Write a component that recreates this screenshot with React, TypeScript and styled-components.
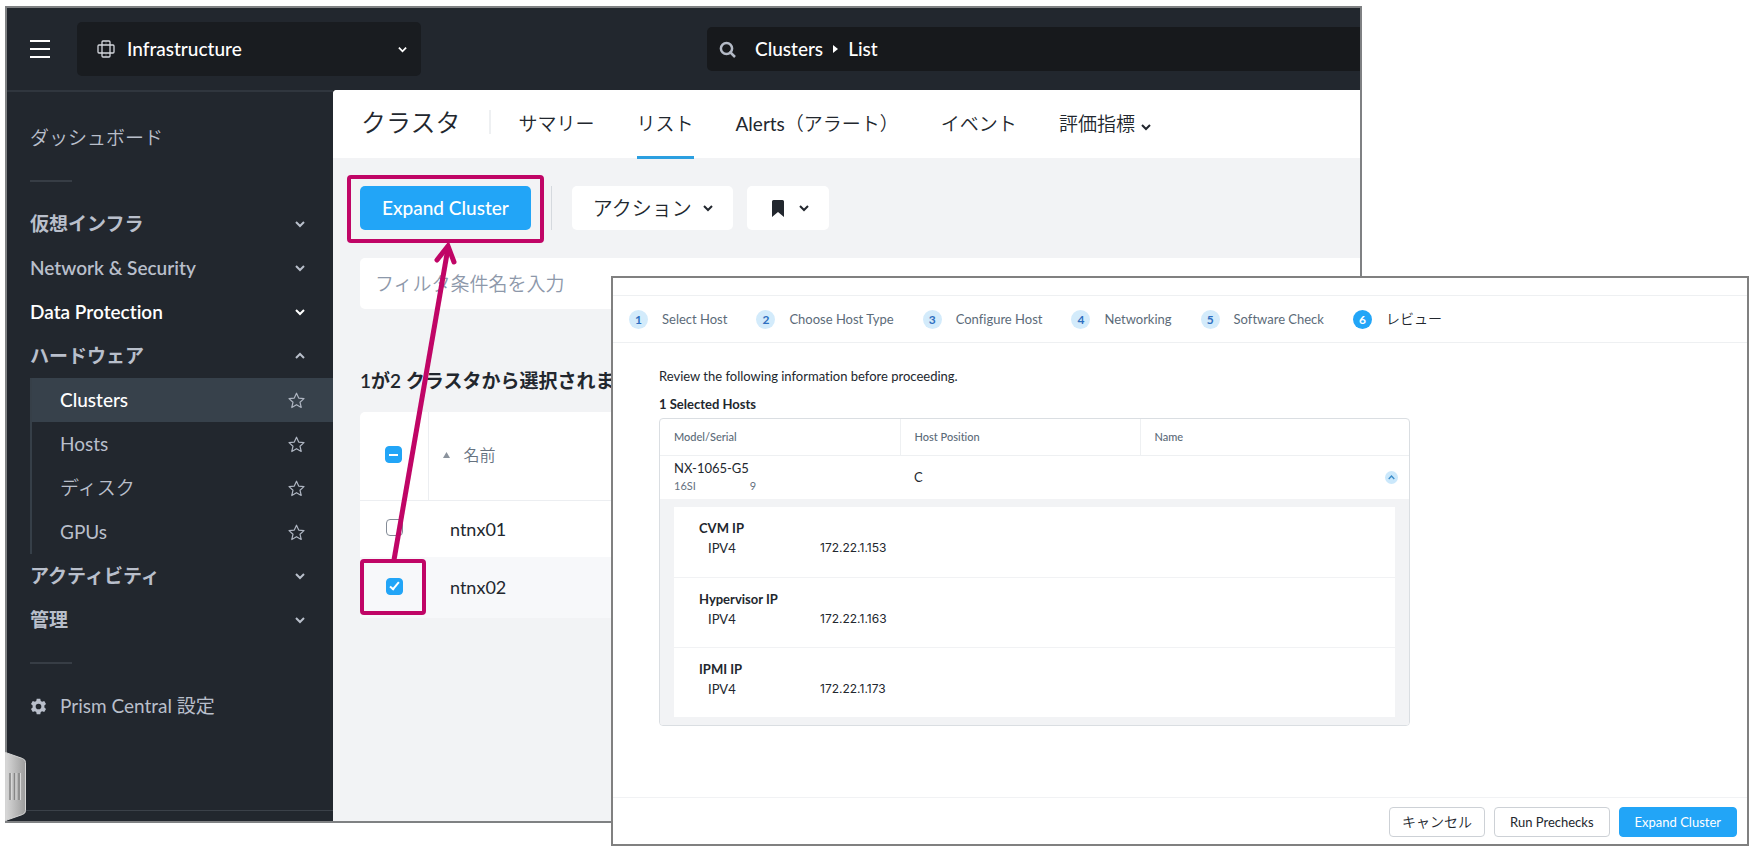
import React from "react";
import styled, { createGlobalStyle, css } from "styled-components";

const GlobalStyle = createGlobalStyle`
  *, *::before, *::after { box-sizing: border-box; }
  body {
    margin: 0;
    background: #fff;
    color: #22272e;
    font-family: Lato, "Noto Sans CJK JP", sans-serif;
    font-size: 19px;
    line-height: 24px;
    font-variant-ligatures: none;
  }
  button, input { font: inherit; color: inherit; }
  button { border: 0; padding: 0; background: none; cursor: pointer; }
  a { color: inherit; text-decoration: none; }
  h1, h2, h3, p, ul, ol, dl, dd { margin: 0; padding: 0; }
  ul, ol { list-style: none; }
  table { border-collapse: collapse; border-spacing: 0; }
  svg { display: block; flex: none; }
`;

const accent = "#22a5f7";
const marker = "#c00566";

/* ---------- windows ---------- */

const Desk = styled.div`
  position: relative;
  display: flex;
  min-height: 100vh;
  padding: 6px 391px 27px 5px;
`;

const ConsoleWindow = styled.div`
  position: relative;
  flex: 1;
  min-width: 0;
  display: flex;
  flex-direction: column;
  border: 2px solid #7f8183;
  background: #22272e;
`;

const WizardWindow = styled.section`
  position: absolute;
  inset: 276px 4px 4px 611px;
  display: flex;
  flex-direction: column;
  border: 2px solid #808080;
  background: #fff;
  font-size: 13px;
  line-height: 18px;
`;

/* ---------- top bar ---------- */

const TopBar = styled.header`
  display: grid;
  grid-template-columns: 70px 344px 1fr;
  align-items: center;
  height: 82px;
  color: #fff;
`;

const MenuButton = styled.button`
  justify-self: start;
  margin-left: 23px;
  display: flex;
  flex-direction: column;
  gap: 6px;
  width: 20px;
  span { height: 2px; background: #fff; }
`;

const AppSwitcher = styled.button`
  display: flex;
  align-items: center;
  gap: 12px;
  height: 54px;
  padding: 0 14px 0 20px;
  border-radius: 5px;
  background: #191c20;
  font-weight: 500;
  span { flex: 1; text-align: left; }
`;

const SearchBar = styled.div`
  display: flex;
  align-items: center;
  gap: 19px;
  height: 44px;
  margin-left: 286px;
  padding-left: 12px;
  border-radius: 5px 0 0 5px;
  background: #17191c;
  color: #b4bac6;
`;

const Crumbs = styled.nav`
  display: flex;
  align-items: center;
  gap: 10px;
  color: #fff;
  font-weight: 500;
`;

/* ---------- sidebar ---------- */

const Body = styled.div`
  flex: 1;
  display: flex;
`;

const Sidebar = styled.nav`
  display: flex;
  flex-direction: column;
  width: 326px;
  padding: 24px 0 10px 23px;
  border-top: 2px solid #30363e;
  color: #b9bfcb;
`;

const rowLayout = css`
  display: flex;
  align-items: center;
  width: 100%;
  height: 44px;
`;

const DashboardLink = styled.a`
  ${rowLayout}
  font-weight: 350;
`;

const Divider = styled.hr`
  width: 42px;
  height: 2px;
  margin: 20px 0;
  border: 0;
  background: #373d45;
`;

const GroupButton = styled.button<{ $bright?: boolean }>`
  ${rowLayout}
  justify-content: space-between;
  padding-right: 28px;
  font-weight: 600;
  color: ${(p) => (p.$bright ? "#fff" : "#b9bfcb")};
`;

const SubList = styled.ul`
  border-left: 2px solid #363f48;
`;

const SubItem = styled.li<{ $active?: boolean }>`
  ${rowLayout}
  justify-content: space-between;
  padding: 0 28px 0 28px;
  background: ${(p) => (p.$active ? "#37414b" : "none")};
  a { color: ${(p) => (p.$active ? "#fff" : "#b9bfcb")}; font-weight: ${(p) => (p.$active ? 500 : 350)}; }
  a:lang(en) { font-weight: ${(p) => (p.$active ? 500 : 400)}; }
`;

const SettingsLink = styled.a`
  ${rowLayout}
  gap: 13px;
`;

const SidebarFoot = styled.div`
  margin: auto 0 0 -23px;
  border-top: 1px solid #3b4149;
`;

const DrawerHandle = styled.button`
  position: absolute;
  left: -2px;
  bottom: 0;
`;

/* ---------- main ---------- */

const Main = styled.main`
  position: relative;
  flex: 1;
  min-width: 0;
  border-radius: 4px 0 0 0;
  overflow: hidden;
  background: #f2f3f5;
`;

const TabBar = styled.div`
  display: flex;
  align-items: stretch;
  gap: 28px;
  height: 69px;
  padding: 0 28px;
  background: linear-gradient(#fff 68px, #f2f3f5 68px);
`;

const PageTitle = styled.h1`
  align-self: center;
  padding-bottom: 6px;
  font-size: 25px;
  line-height: 32px;
  font-weight: 350;
`;

const TitleRule = styled.span`
  align-self: center;
  width: 2px;
  height: 24px;
  margin-bottom: 6px;
  background: #eef0f2;
`;

const Tabs = styled.nav`
  display: flex;
  gap: 42px;
`;

const Tab = styled.a<{ $current?: boolean }>`
  display: flex;
  align-items: center;
  gap: 6px;
  padding-top: 2px;
  border-bottom: 3px solid ${(p) => (p.$current ? "#2b9fe0" : "transparent")};
  font-weight: 350;
  svg { margin-top: 6px; }
  span { font-weight: 400; }
`;

const Content = styled.div`
  padding: 27px 0 0 27px;
`;

const Toolbar = styled.div`
  display: flex;
  gap: 20px;
  height: 44px;
`;

const Marked = styled.div`
  position: relative;
  display: flex;
  &::after {
    content: "";
    position: absolute;
    inset: -11px -13px -13px;
    border: 4px solid ${marker};
    border-radius: 4px;
    pointer-events: none;
  }
`;

const ExpandButton = styled.button`
  padding: 0 22px;
  border-radius: 5px;
  background: ${accent};
  color: #fff;
  font-weight: 500;
`;

const ToolRule = styled.span`
  width: 1px;
  background: #d5d9de;
`;

const DropButtons = styled.div`
  display: flex;
  gap: 14px;
`;

const DropButton = styled.button<{ $iconOnly?: boolean }>`
  display: flex;
  align-items: center;
  gap: ${(p) => (p.$iconOnly ? 15 : 11)}px;
  padding: 0 20px 0 ${(p) => (p.$iconOnly ? 25 : 21)}px;
  border-radius: 5px;
  background: #fff;
  font-size: 20px;
  font-weight: 350;
`;

const FilterInput = styled.input`
  display: block;
  width: 100%;
  height: 51px;
  margin-top: 28px;
  padding: 0 15px;
  border: 0;
  border-radius: 5px 0 0 5px;
  background: #fff;
  font-weight: 350;
  &::placeholder { color: #8d98aa; opacity: 1; }
`;

const SelectionNote = styled.h2`
  margin: 60px 0 19px;
  font-size: 19px;
  line-height: 24px;
  font-weight: 600;
`;

const ClusterTable = styled.table`
  width: 100%;
  background: #fff;
  border-radius: 5px 0 0 0;
  th, td { padding: 0; text-align: left; font-weight: 400; }
  thead th { height: 88px; border-bottom: 1px solid #eceef1; color: #66727f; font-size: 16px; font-weight: 350; }
  thead th + th { border-left: 1px solid #eceef1; }
  td:first-child, th:first-child { width: 68px; }
`;

const ClusterRow = styled.tr<{ $selected?: boolean }>`
  height: ${(p) => (p.$selected ? 61 : 56)}px;
  background: ${(p) => (p.$selected ? "#f7f8fa" : "#fff")};
  td + td { padding-left: 22px; font-size: 18px; }
`;

const CheckCell = styled.div<{ $marked?: boolean }>`
  position: relative;
  display: flex;
  align-items: center;
  justify-content: center;
  height: 56px;
  padding-bottom: 2px;
  &::after {
    content: "";
    display: ${(p) => (p.$marked ? "block" : "none")};
    position: absolute;
    inset: 0 2px 0 0;
    border: 4px solid ${marker};
    border-radius: 4px;
    pointer-events: none;
  }
`;

const Checkbox = styled.input`
  appearance: none;
  display: grid;
  place-items: center;
  width: 17px;
  height: 17px;
  margin: 0;
  border: 1px solid #848c97;
  border-radius: 4px;
  background: #fff;
  &:checked, &:indeterminate { border-color: ${accent}; background: ${accent}; }
  &:checked::after {
    content: "";
    width: 5px;
    height: 10px;
    margin-bottom: 3px;
    border: solid #fff;
    border-width: 0 2px 2px 0;
    transform: rotate(40deg);
  }
  &:indeterminate::after { content: ""; width: 9px; height: 2px; background: #fff; }
`;

const SortLabel = styled.span`
  display: flex;
  align-items: center;
  gap: 14px;
  padding: 0 0 2px 14px;
`;

const Arrow = styled.svg`
  position: absolute;
  left: 50px;
  top: 150px;
  pointer-events: none;
`;

/* ---------- wizard ---------- */

const Steps = styled.ol`
  display: flex;
  align-items: center;
  gap: 29px;
  height: 48px;
  margin-top: 17px;
  padding: 0 16px;
  border: solid #eef0f2;
  border-width: 1px 0;
`;

const Step = styled.li<{ $current?: boolean }>`
  display: flex;
  align-items: center;
  gap: 14px;
  color: ${(p) => (p.$current ? "#22272e" : "#5c6b79")};
  font-size: ${(p) => (p.$current ? 14 : 13)}px;
  font-weight: ${(p) => (p.$current ? 350 : 400)};
  span {
    width: 19px;
    height: 19px;
    border-radius: 50%;
    background: ${(p) => (p.$current ? accent : "#d3ebfb")};
    color: ${(p) => (p.$current ? "#fff" : "#2f6fc0")};
    font-size: 12px;
    line-height: 19px;
    font-weight: 700;
    text-align: center;
  }
`;

const Review = styled.div`
  flex: 1;
  padding: 24px 46px;
  max-width: 843px;
`;

const HostsTitle = styled.h2`
  margin: 10px 0 5px;
  font-size: 13px;
  line-height: 18px;
  font-weight: 700;
`;

const HostFrame = styled.div`
  border: 1px solid #dadee2;
  border-radius: 4px;
  overflow: hidden;
`;

const HostTable = styled.table`
  width: 100%;
  table-layout: fixed;
  th, td { padding: 0 14px; text-align: left; }
  th { height: 36px; border-bottom: 1px solid #eef0f2; color: #5c6b79; font-size: 11px; font-weight: 500; }
  th + th { border-left: 1px solid #eef0f2; }
  th:first-child, th:nth-child(2) { width: 240px; }
`;

const HostRow = styled.tr`
  height: 44px;
  td:last-child { padding-right: 11px; }
`;

const Serial = styled.span`
  display: flex;
  gap: 54px;
  color: #66727f;
  font-size: 11px;
`;

const CollapseButton = styled.button`
  display: grid;
  place-items: center;
  width: 13px;
  height: 13px;
  margin-left: auto;
  border-radius: 50%;
  background: #cbe8fb;
  color: #3b8cc9;
`;

const DetailRow = styled.tr`
  background: #f2f3f5;
  > td { padding: 8px 14px; }
`;

const Address = styled.dl`
  display: grid;
  grid-template-columns: 112px 1fr;
  align-content: start;
  row-gap: 2px;
  height: 70px;
  padding: 12px 34px 0;
  background: #fff;
  & + & { border-top: 1px solid #f1f2f4; }
  dd { font-family: Inter, sans-serif; font-size: 12px; }
`;

const AddressTitle = styled.h3`
  grid-column: 1 / -1;
  margin-left: -9px;
  font-size: 13px;
  line-height: 18px;
  font-weight: 700;
`;

const Footer = styled.footer`
  display: flex;
  justify-content: flex-end;
  gap: 9px;
  padding: 9px 10px 7px;
  border-top: 1px solid #f1f2f4;
`;

const FooterButton = styled.button<{ $primary?: boolean }>`
  height: 30px;
  padding: 0 15px;
  border: 1px solid ${(p) => (p.$primary ? accent : "#cdd1d6")};
  border-radius: 4px;
  background: ${(p) => (p.$primary ? accent : "#fff")};
  color: ${(p) => (p.$primary ? "#fff" : "#22272e")};
  font-weight: 400;
  &:lang(ja) { padding: 0 12px; font-size: 14px; font-weight: 350; }
`;

/* ---------- icons ---------- */

const Chevron = ({ up, size = 10, weight = 2 }: { up?: boolean; size?: number; weight?: number }) => (
  <svg width={size} height={size} viewBox="0 0 10 10" fill="none" stroke="currentColor" strokeWidth={weight}>
    <path d={up ? "M1 7l4-4 4 4" : "M1 3l4 4 4-4"} />
  </svg>
);

const Star = () => (
  <svg width="17" height="17" viewBox="0 0 17 17" fill="none" stroke="#aeb5c1" strokeWidth="1.2" strokeLinejoin="round">
    <path d="M8.5 1.2l2.2 4.9 5.3.5-4 3.6 1.2 5.3-4.7-2.8-4.7 2.8L5 10.200 1 6.600l5.300-.5z" />
  </svg>
);

const GridIcon = () => (
  <svg width="18" height="18" viewBox="0 0 18 18" fill="none" stroke="#d3d6dc" strokeWidth="1.300">
    <rect x="5" y="1" width="8" height="16" rx="1" />
    <rect x="1" y="5" width="16" height="8" rx="1" />
    <path d="M9 1v4M9 13v4" strokeWidth="0.600" opacity="0.500" />
  </svg>
);

const SearchIcon = () => (
  <svg width="17" height="17" viewBox="0 0 17 17" fill="none" stroke="currentColor" strokeWidth="2.500">
    <circle cx="7.500" cy="7.500" r="5.600" />
    <path d="M10.500 10.500l5.500 5.500" />
  </svg>
);

const Gear = () => (
  <svg width="17" height="17" viewBox="0 0 24 24" fill="#b9bfcb">
    <path
      fillRule="evenodd"
      d="M9.500 1h5l.7 3.100 1.900 1.100 3-1 2.500 4.300-2.300 2.200v2.600l2.300 2.200-2.500 4.300-3-1-1.900 1.100-.7 3.100h-5l-.7-3.100-1.900-1.100-3 1-2.500-4.300 2.300-2.200v-2.600L1.400 8.500l2.500-4.300 3 1 1.900-1.100zM12 8a4 4 0 1 0 0 8 4 4 0 0 0 0-8z"
    />
  </svg>
);

const Bookmark = () => (
  <svg width="12" height="17" viewBox="0 0 12 17" fill="currentColor">
    <path d="M1.500 0h9A1.500 1.500 0 0 1 12 1.500V17l-6-5-6 5V1.500A1.500 1.500 0 0 1 1.500 0z" />
  </svg>
);

const HandleShape = () => (
  <svg width="21" height="69" viewBox="0 0 21 69">
    <defs>
      <linearGradient id="handle" x1="0" x2="1">
        <stop offset="0" stopColor="#d9d9d9" />
        <stop offset="1" stopColor="#9c9c9c" />
      </linearGradient>
    </defs>
    <path d="M.5.500l17 6q3 1 3 4v48q0 3-3 4l-17 6z" fill="url(#handle)" stroke="#d4d4d4" />
    <path d="M5 21v27M9.500 21v27M14 21v27" stroke="#868686" strokeWidth="1.500" />
    <path d="M6.500 21v27M11 21v27M15.500 21v27" stroke="#d8d8d8" />
  </svg>
);

/* ---------- data ---------- */

const hardware = [
  { label: "Clusters", lang: "en", active: true },
  { label: "Hosts", lang: "en" },
  { label: "ディスク", lang: "ja" },
  { label: "GPUs", lang: "en" },
];

const steps = ["Select Host", "Choose Host Type", "Configure Host", "Networking", "Software Check", "レビュー"];

const addresses = [
  { title: "CVM IP", ip: "172.22.1.153" },
  { title: "Hypervisor IP", ip: "172.22.1.163" },
  { title: "IPMI IP", ip: "172.22.1.173" },
];

const setIndeterminate = (el: HTMLInputElement | null) => {
  if (el) el.indeterminate = true;
};

const Group = ({ label, open, bright }: { label: string; open?: boolean; bright?: boolean }) => (
  <GroupButton type="button" $bright={bright} aria-expanded={!!open}>
    {label}
    <Chevron up={open} />
  </GroupButton>
);

export default function App() {
  return (
    <>
      <GlobalStyle />
      <Desk lang="ja">
        <ConsoleWindow>
          <TopBar>
            <MenuButton type="button" aria-label="メニュー">
              <span />
              <span />
              <span />
            </MenuButton>
            <AppSwitcher type="button">
              <GridIcon />
              <span>Infrastructure</span>
              <Chevron size={9} />
            </AppSwitcher>
            <SearchBar>
              <SearchIcon />
              <Crumbs>
                <a href="#clusters">Clusters</a>
                <svg width="5" height="8" viewBox="0 0 5 8" fill="#fff">
                  <path d="M0 0l5 4-5 4z" />
                </svg>
                <a href="#list">List</a>
              </Crumbs>
            </SearchBar>
          </TopBar>

          <Body>
            <Sidebar>
              <DashboardLink href="#dashboard">ダッシュボード</DashboardLink>
              <Divider />
              <Group label="仮想インフラ" />
              <Group label="Network & Security" />
              <Group label="Data Protection" bright />
              <Group label="ハードウェア" open />
              <SubList>
                {hardware.map((h) => (
                  <SubItem key={h.label} $active={h.active}>
                    <a href="#hardware" lang={h.lang}>{h.label}</a>
                    <Star />
                  </SubItem>
                ))}
              </SubList>
              <Group label="アクティビティ" />
              <Group label="管理" />
              <Divider />
              <SettingsLink href="#settings">
                <Gear />
                Prism Central 設定
              </SettingsLink>
              <SidebarFoot />
            </Sidebar>

            <Main>
              <TabBar>
                <PageTitle>クラスタ</PageTitle>
                <TitleRule />
                <Tabs>
                  <Tab href="#summary">サマリー</Tab>
                  <Tab href="#list" $current>リスト</Tab>
                  <Tab href="#alerts"><div><span>Alerts</span>（アラート）</div></Tab>
                  <Tab href="#events">イベント</Tab>
                  <Tab href="#metrics">評価指標<Chevron /></Tab>
                </Tabs>
              </TabBar>
              <Content>
                <Toolbar>
                  <Marked>
                    <ExpandButton type="button">Expand Cluster</ExpandButton>
                  </Marked>
                  <ToolRule />
                  <DropButtons>
                    <DropButton type="button">アクション<Chevron /></DropButton>
                    <DropButton type="button" $iconOnly aria-label="ブックマーク"><Bookmark /><Chevron /></DropButton>
                  </DropButtons>
                </Toolbar>
                <FilterInput type="text" aria-label="フィルタ" placeholder="フィルタ条件名を入力" />
                <SelectionNote>1が2 クラスタから選択されま</SelectionNote>
                <ClusterTable>
                  <thead>
                    <tr>
                      <th>
                        <CheckCell>
                          <Checkbox type="checkbox" ref={setIndeterminate} aria-label="すべて選択" />
                        </CheckCell>
                      </th>
                      <th>
                        <SortLabel>
                          <svg width="7" height="6" viewBox="0 0 7 6" fill="#8b939d">
                            <path d="M3.500 0L7 6H0z" />
                          </svg>
                          名前
                        </SortLabel>
                      </th>
                    </tr>
                  </thead>
                  <tbody>
                    <ClusterRow>
                      <td><CheckCell><Checkbox type="checkbox" aria-label="ntnx01" /></CheckCell></td>
                      <td>ntnx01</td>
                    </ClusterRow>
                    <ClusterRow $selected>
                      <td><CheckCell $marked><Checkbox type="checkbox" defaultChecked aria-label="ntnx02" /></CheckCell></td>
                      <td>ntnx02</td>
                    </ClusterRow>
                  </tbody>
                </ClusterTable>
              </Content>
              <Arrow width="80" height="325" viewBox="0 0 80 325" fill="none" stroke={marker} strokeWidth="5">
                <path d="M11 320L65 8" />
                <path d="M54 20L65 6l6 16" strokeLinecap="round" strokeLinejoin="miter" />
              </Arrow>
            </Main>
          </Body>
          <DrawerHandle type="button" aria-label="サイドバー">
            <HandleShape />
          </DrawerHandle>
        </ConsoleWindow>

        <WizardWindow>
          <Steps>
            {steps.map((label, i) => (
              <Step key={label} $current={i === 5}>
                <span>{i + 1}</span>
                {label}
              </Step>
            ))}
          </Steps>
          <Review>
            <p>Review the following information before proceeding.</p>
            <HostsTitle>1 Selected Hosts</HostsTitle>
            <HostFrame>
              <HostTable>
                <thead>
                  <tr>
                    <th>Model/Serial</th>
                    <th>Host Position</th>
                    <th>Name</th>
                  </tr>
                </thead>
                <tbody>
                  <HostRow>
                    <td>
                      NX-1065-G5
                      <Serial><span>16SI</span><span>9</span></Serial>
                    </td>
                    <td>C</td>
                    <td>
                      <CollapseButton type="button" aria-label="折りたたむ"><Chevron up size={7} /></CollapseButton>
                    </td>
                  </HostRow>
                  <DetailRow>
                    <td colSpan={3}>
                      {addresses.map((a) => (
                        <Address key={a.title}>
                          <AddressTitle>{a.title}</AddressTitle>
                          <dt>IPV4</dt>
                          <dd>{a.ip}</dd>
                        </Address>
                      ))}
                    </td>
                  </DetailRow>
                </tbody>
              </HostTable>
            </HostFrame>
          </Review>
          <Footer>
            <FooterButton type="button">キャンセル</FooterButton>
            <FooterButton type="button" lang="en">Run Prechecks</FooterButton>
            <FooterButton type="button" lang="en" $primary>Expand Cluster</FooterButton>
          </Footer>
        </WizardWindow>
      </Desk>
    </>
  );
}
